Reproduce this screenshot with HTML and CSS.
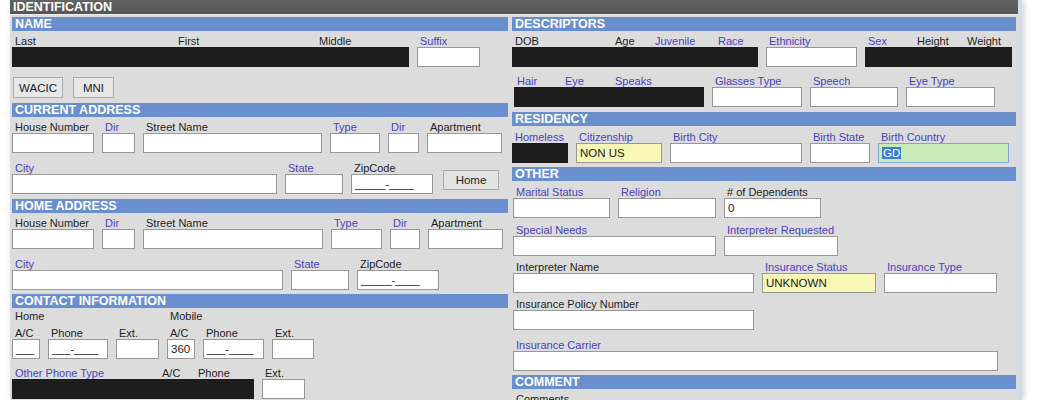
FILE: index.html
```html
<!DOCTYPE html>
<html>
<head>
<meta charset="utf-8">
<title>Identification</title>
<link rel="stylesheet" href="styles.css">
</head>
<body>
<div class="window">
  <div class="titlebar">IDENTIFICATION</div>
  <div class="cols">
    <div class="col col-left">
      <div class="hdr">NAME</div>
      <div class="row mt4">
        <div class="grp">
          <div class="fld w163"><div class="lbl">Last</div><div class="box blk"></div></div>
          <div class="fld w141"><div class="lbl">First</div><div class="box blk"></div></div>
          <div class="fld w93"><div class="lbl">Middle</div><div class="box blk"></div></div>
        </div>
        <div class="fld w63"><div class="lbl b">Suffix</div><div class="box"></div></div>
      </div>
      <div class="btnrow">
        <button class="btn w50">WACIC</button>
        <button class="btn w41">MNI</button>
      </div>

      <div class="hdr mt5">CURRENT ADDRESS</div>
      <div class="row mt4">
        <div class="fld w82"><div class="lbl">House Number</div><div class="box"></div></div>
        <div class="fld w33"><div class="lbl b">Dir</div><div class="box"></div></div>
        <div class="fld w179"><div class="lbl">Street Name</div><div class="box"></div></div>
        <div class="fld w50"><div class="lbl b">Type</div><div class="box"></div></div>
        <div class="fld w31"><div class="lbl b">Dir</div><div class="box"></div></div>
        <div class="fld w75"><div class="lbl">Apartment</div><div class="box"></div></div>
      </div>
      <div class="row mt9">
        <div class="fld w265"><div class="lbl b">City</div><div class="box"></div></div>
        <div class="fld w58"><div class="lbl b">State</div><div class="box"></div></div>
        <div class="fld w82"><div class="lbl">ZipCode</div><div class="box mask">_____-____</div></div>
        <button class="btn w56 btn-home">Home</button>
      </div>

      <div class="hdr mt5">HOME ADDRESS</div>
      <div class="row mt4">
        <div class="fld w82"><div class="lbl">House Number</div><div class="box"></div></div>
        <div class="fld w33"><div class="lbl b">Dir</div><div class="box"></div></div>
        <div class="fld w180"><div class="lbl">Street Name</div><div class="box"></div></div>
        <div class="fld w51"><div class="lbl b">Type</div><div class="box"></div></div>
        <div class="fld w30"><div class="lbl b">Dir</div><div class="box"></div></div>
        <div class="fld w75"><div class="lbl">Apartment</div><div class="box"></div></div>
      </div>
      <div class="row mt9">
        <div class="fld w271"><div class="lbl b">City</div><div class="box"></div></div>
        <div class="fld w58"><div class="lbl b">State</div><div class="box"></div></div>
        <div class="fld w82"><div class="lbl">ZipCode</div><div class="box mask">_____-____</div></div>
      </div>

      <div class="hdr mt4">CONTACT INFORMATION</div>
      <div class="row mt2">
        <div class="cgroup">
          <div class="lbl">Home</div>
          <div class="row mt5">
            <div class="fld w28"><div class="lbl">A/C</div><div class="box mask">___</div></div>
            <div class="fld w60"><div class="lbl">Phone</div><div class="box mask">___-____</div></div>
            <div class="fld w43"><div class="lbl">Ext.</div><div class="box"></div></div>
          </div>
        </div>
        <div class="cgroup">
          <div class="lbl">Mobile</div>
          <div class="row mt5">
            <div class="fld w28"><div class="lbl">A/C</div><div class="box">360</div></div>
            <div class="fld w61"><div class="lbl">Phone</div><div class="box mask">___-____</div></div>
            <div class="fld w42"><div class="lbl">Ext.</div><div class="box"></div></div>
          </div>
        </div>
      </div>
      <div class="row mt8">
        <div class="grp">
          <div class="fld w147"><div class="lbl b">Other Phone Type</div><div class="box blk"></div></div>
          <div class="fld w36"><div class="lbl">A/C</div><div class="box blk"></div></div>
          <div class="fld w59"><div class="lbl">Phone</div><div class="box blk"></div></div>
        </div>
        <div class="fld w43"><div class="lbl">Ext.</div><div class="box"></div></div>
      </div>
    </div>

    <div class="col col-right">
      <div class="hdr">DESCRIPTORS</div>
      <div class="row mt4">
        <div class="grp">
          <div class="fld w100"><div class="lbl">DOB</div><div class="box blk"></div></div>
          <div class="fld w40"><div class="lbl">Age</div><div class="box blk"></div></div>
          <div class="fld w63"><div class="lbl b">Juvenile</div><div class="box blk"></div></div>
          <div class="fld w43"><div class="lbl b">Race</div><div class="box blk"></div></div>
        </div>
        <div class="fld w91"><div class="lbl b">Ethnicity</div><div class="box"></div></div>
        <div class="grp">
          <div class="fld w49"><div class="lbl b">Sex</div><div class="box blk"></div></div>
          <div class="fld w50"><div class="lbl">Height</div><div class="box blk"></div></div>
          <div class="fld w48"><div class="lbl">Weight</div><div class="box blk"></div></div>
        </div>
      </div>
      <div class="row mt8 ind2">
        <div class="grp">
          <div class="fld w48"><div class="lbl b">Hair</div><div class="box blk"></div></div>
          <div class="fld w50"><div class="lbl b">Eye</div><div class="box blk"></div></div>
          <div class="fld w92"><div class="lbl b">Speaks</div><div class="box blk"></div></div>
        </div>
        <div class="fld w90"><div class="lbl b">Glasses Type</div><div class="box"></div></div>
        <div class="fld w88"><div class="lbl b">Speech</div><div class="box"></div></div>
        <div class="fld w89"><div class="lbl b">Eye Type</div><div class="box"></div></div>
      </div>

      <div class="hdr mt5">RESIDENCY</div>
      <div class="row mt5">
        <div class="fld w56"><div class="lbl b">Homeless</div><div class="box blk"></div></div>
        <div class="fld w86"><div class="lbl b">Citizenship</div><div class="box yel">NON US</div></div>
        <div class="fld w132"><div class="lbl b">Birth City</div><div class="box"></div></div>
        <div class="fld w60"><div class="lbl b">Birth State</div><div class="box"></div></div>
        <div class="fld w131"><div class="lbl b">Birth Country</div><div class="box grn"><span class="sel">GD</span></div></div>
      </div>

      <div class="hdr mt4">OTHER</div>
      <div class="row mt5 ind1">
        <div class="fld w97"><div class="lbl b">Marital Status</div><div class="box"></div></div>
        <div class="fld w98"><div class="lbl b">Religion</div><div class="box"></div></div>
        <div class="fld w97"><div class="lbl">&#35; of Dependents</div><div class="box">0</div></div>
      </div>
      <div class="row mt6 ind1">
        <div class="fld w203"><div class="lbl b">Special Needs</div><div class="box"></div></div>
        <div class="fld w114"><div class="lbl b">Interpreter Requested</div><div class="box"></div></div>
      </div>
      <div class="row mt5 ind1">
        <div class="fld w241"><div class="lbl">Interpreter Name</div><div class="box"></div></div>
        <div class="fld w114"><div class="lbl b">Insurance Status</div><div class="box yel">UNKNOWN</div></div>
        <div class="fld w113"><div class="lbl b">Insurance Type</div><div class="box"></div></div>
      </div>
      <div class="row mt5 ind1">
        <div class="fld w241"><div class="lbl">Insurance Policy Number</div><div class="box"></div></div>
      </div>
      <div class="row mt9 ind1">
        <div class="fld w485"><div class="lbl b">Insurance Carrier</div><div class="box"></div></div>
      </div>

      <div class="hdr mt4">COMMENT</div>
      <div class="lbl mt4 ind1">Comments</div>
    </div>
  </div>
</div>
</body>
</html>
```

FILE: styles.css
```css
* { box-sizing: border-box; }

html, body {
  margin: 0;
  padding: 0;
  background: #ffffff;
}

body {
  font-family: "Liberation Sans", Arial, sans-serif;
  font-size: 11px;
  color: #1e1e1e;
  height: 400px;
  overflow: hidden;
}

.window {
  margin-left: 10px;
  width: 1012px;
  height: 400px;
  background: #dcdcdc;
  border-right: 4px solid #d2dce8;
  box-shadow: 2px 0 6px rgba(0, 0, 0, 0.18);
}

.titlebar {
  height: 15px;
  background: linear-gradient(#636363, #555555);
  border-bottom: 1px solid #eeeeee;
  color: #ffffff;
  font-weight: bold;
  font-size: 12.5px;
  line-height: 14px;
  padding-left: 3px;
}

.cols {
  display: flex;
  gap: 4px;
  padding: 2px 2px 0 2px;
}

.col { flex: none; display: flex; flex-direction: column; }
.col-left { width: 496px; }
.col-right { width: 504px; }

.hdr {
  height: 14px;
  background: #6a8fce;
  color: #ffffff;
  font-weight: bold;
  font-size: 12.5px;
  line-height: 14px;
  padding-left: 3px;
  white-space: nowrap;
}

.row {
  display: flex;
  align-items: flex-end;
  gap: 8px;
}

.grp { display: flex; }

.cgroup { display: flex; flex-direction: column; }

.fld {
  display: flex;
  flex-direction: column;
  flex: none;
}

.lbl {
  font-size: 11px;
  line-height: 12px;
  height: 12px;
  padding-left: 3px;
  white-space: nowrap;
  color: #1e1e1e;
}

.lbl.b { color: #4a3fbf; }

.box {
  height: 20px;
  border: 1px solid #989898;
  background: #ffffff;
  font-size: 11.5px;
  line-height: 18px;
  padding: 0 3px;
  white-space: nowrap;
  overflow: hidden;
  color: #1a1a1a;
}

.box.blk { background: #1d1d1d; border-color: #1d1d1d; }
.box.yel { background: #f9f7b6; }
.box.grn { background: #c9eab9; border-color: #7ea7d6; }
.box.mask { font-size: 11px; }

.sel { background: #3c7ed0; color: #ffffff; padding: 0 1px; }

.btnrow {
  display: flex;
  gap: 10px;
  margin: 10px 0 0 1px;
}

.btn {
  height: 21px;
  border: 1px solid #aaaaaa;
  background: #e7e7e7;
  font-family: "Liberation Sans", Arial, sans-serif;
  font-size: 11.5px;
  color: #222222;
  padding: 0;
  flex: none;
}

.btn-home { height: 20px; margin: 0 0 4px 2px; background: #e2e2e2; }

.ind1 { margin-left: 1px; }
.ind2 { margin-left: 2px; }

.mt2 { margin-top: 2px; }
.mt4 { margin-top: 4px; }
.mt5 { margin-top: 5px; }
.mt6 { margin-top: 6px; }
.mt8 { margin-top: 8px; }
.mt9 { margin-top: 9px; }

.w28 { width: 28px; }
.w30 { width: 30px; }
.w31 { width: 31px; }
.w33 { width: 33px; }
.w36 { width: 36px; }
.w40 { width: 40px; }
.w41 { width: 41px; }
.w42 { width: 42px; }
.w43 { width: 43px; }
.w48 { width: 48px; }
.w49 { width: 49px; }
.w50 { width: 50px; }
.w51 { width: 51px; }
.w56 { width: 56px; }
.w58 { width: 58px; }
.w59 { width: 59px; }
.w60 { width: 60px; }
.w61 { width: 61px; }
.w63 { width: 63px; }
.w75 { width: 75px; }
.w82 { width: 82px; }
.w86 { width: 86px; }
.w88 { width: 88px; }
.w89 { width: 89px; }
.w90 { width: 90px; }
.w91 { width: 91px; }
.w92 { width: 92px; }
.w93 { width: 93px; }
.w97 { width: 97px; }
.w98 { width: 98px; }
.w100 { width: 100px; }
.w113 { width: 113px; }
.w114 { width: 114px; }
.w131 { width: 131px; }
.w132 { width: 132px; }
.w141 { width: 141px; }
.w147 { width: 147px; }
.w163 { width: 163px; }
.w179 { width: 179px; }
.w180 { width: 180px; }
.w203 { width: 203px; }
.w241 { width: 241px; }
.w265 { width: 265px; }
.w271 { width: 271px; }
.w485 { width: 485px; }
```
